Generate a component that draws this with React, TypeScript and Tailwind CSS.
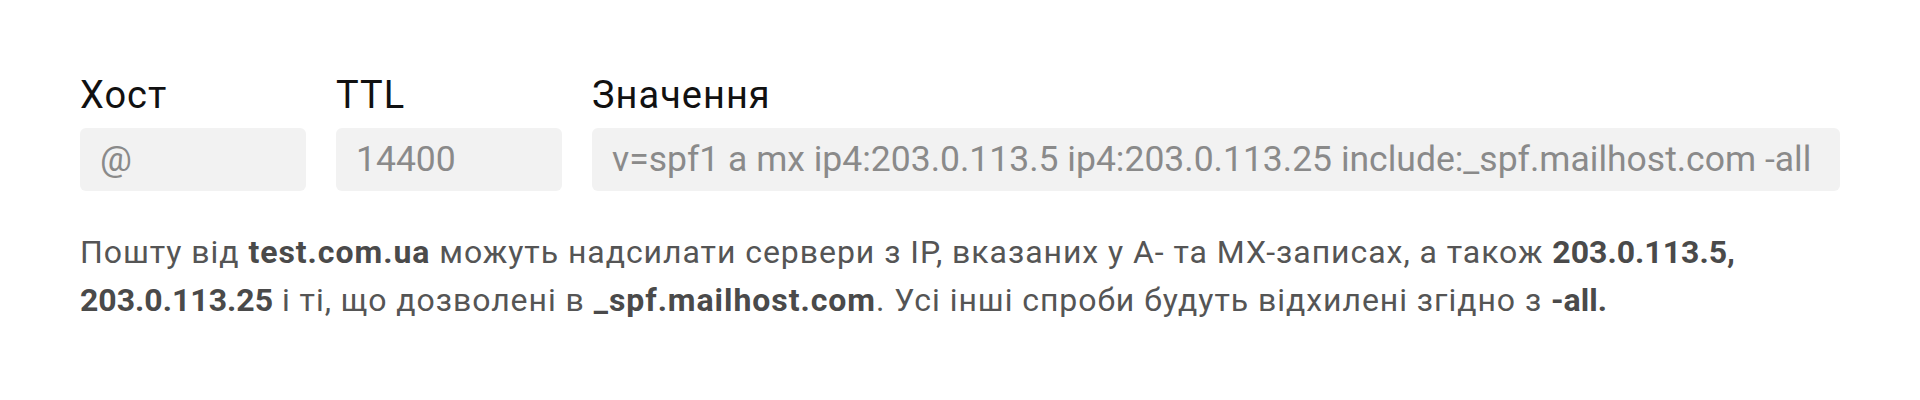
const fields = [
  { label: "Хост", value: "@" },
  { label: "TTL", value: "14400" },
  {
    label: "Значення",
    value: "v=spf1 a mx ip4:203.0.113.5 ip4:203.0.113.25 include:_spf.mailhost.com -all",
  },
];

export default function App() {
  return (
    <div className="w-full h-[400px] bg-white px-20 pt-[72px] font-['Roboto',sans-serif]">
      {/* record fields */}
      <div className="grid grid-cols-[226px_226px_1fr] gap-x-[30px]">
        {fields.map((f) => (
          <div key={f.label} className="flex flex-col">
            <label className="text-[38px] leading-[46px] tracking-[1px] text-[#111111] mb-[10px]">
              {f.label}
            </label>
            <div className="h-[63px] rounded-md bg-[#f2f2f2] px-5 flex items-center text-[35.5px] text-[#8a8a8a] whitespace-nowrap overflow-hidden">
              {f.value}
            </div>
          </div>
        ))}
      </div>

      {/* explanation */}
      <p className="mt-[37px] text-[32px] leading-[48px] tracking-[0.95px] text-[#555555]">
        Пошту від <b className="font-bold text-[#4a4a4a]">test.com.ua</b> можуть надсилати сервери з IP,
        вказаних у A- та MX-записах, а також{" "}
        <b className="font-bold tracking-normal text-[#4a4a4a]">203.0.113.5, 203.0.113.25</b> і ті, що
        дозволені в <b className="font-bold text-[#4a4a4a]">_spf.mailhost.com</b>. Усі інші спроби
        будуть відхилені згідно з <b className="font-bold tracking-normal text-[#4a4a4a]">-all.</b>
      </p>
    </div>
  );
}
